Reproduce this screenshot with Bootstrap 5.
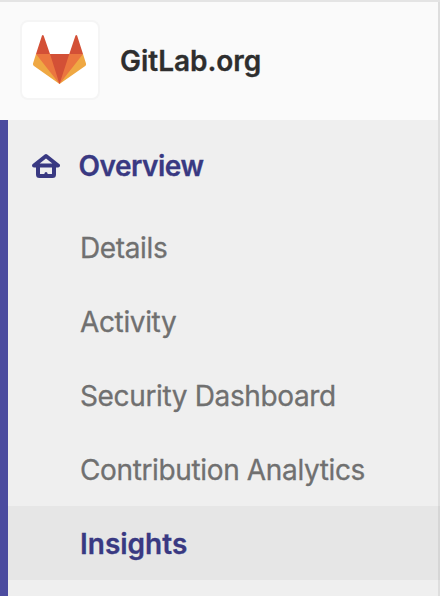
<!DOCTYPE html>
<html lang="en">
<head>
<meta charset="utf-8">
<meta name="viewport" content="width=device-width, initial-scale=1">
<title>GitLab.org</title>
<link rel="stylesheet" href="https://cdn.jsdelivr.net/npm/bootstrap@5.3.0/dist/css/bootstrap.min.css">
<style>
body{font-family:Inter,"Liberation Sans",sans-serif;font-size:28px;line-height:36px;background:#efefef}
.group-sidebar{width:440px;height:596px;border-top:2px solid #e4e4e4;box-shadow:inset -2px 0 #dedede;background:#efefef;-webkit-text-stroke:.3px currentColor}
.group-header{height:118px;margin-right:2px;padding-left:20px;gap:20px;background:#fafafa;color:#2e2e2e}
.group-avatar{width:80px;height:80px;margin-bottom:2px;border:2px solid #f5f5f5;border-radius:8px;background:#fff}
.group-name{letter-spacing:-.03px}
.section-nav{border-left:8px solid #4b4b9f;height:476px}
.section-title{height:90px;padding:1px 0 0 24px;gap:18.500px;color:#393982}
.section-title span{letter-spacing:-.5px}
.section-nav .nav-link{height:74px;padding:2px 0 0 72px;color:#707070;letter-spacing:-.36px}
.section-nav .nav-link.active{color:#393982;background:rgba(0,0,0,.037);letter-spacing:0}
</style>
<script src="https://cdn.jsdelivr.net/npm/bootstrap@5.3.0/dist/js/bootstrap.bundle.min.js"></script>
</head>
<body class="overflow-hidden">
<aside class="group-sidebar">
<header class="group-header d-flex align-items-center">
<div class="group-avatar d-flex align-items-center justify-content-center flex-shrink-0">
<svg width="76" height="76" viewBox="22 22 76 76" aria-hidden="true">
<path fill="#efa843" d="M36 54 33 63.5Q32.7 65 34 66L59.5 84 85.200 66Q86.500 65 86 63.500L83 54Z"/>
<path fill="#eb763f" d="M36 54H83L59.500 84Z"/>
<path fill="#d35036" d="M50 54H69.300L59.500 84ZM36 54 42 35.500Q42.800 34.300 43.600 35.500L50 54ZM69.300 54 75.500 35.500Q76.300 34.300 77.100 35.500L83 54Z"/>
</svg>
</div>
<span class="group-name fw-semibold">GitLab.org</span>
</header>
<nav class="section-nav">
<div class="section-title d-flex align-items-center">
<svg width="28" height="26" viewBox="0 0 28 26" fill="none" stroke="#393982" stroke-width="4" stroke-linejoin="round" stroke-linecap="round" aria-hidden="true">
<path d="M2 12.500 14 3 26 12.500Z"/><path d="M6 13V21.500Q6 23 7.500 23H20.500Q22 23 22 21.500V13"/><path stroke-width="3" d="M14 20.500V22"/>
</svg>
<span class="fw-semibold">Overview</span>
</div>
<div class="nav flex-column flex-nowrap">
<a class="nav-link d-flex align-items-center" href="#">Details</a>
<a class="nav-link d-flex align-items-center" href="#">Activity</a>
<a class="nav-link d-flex align-items-center" href="#">Security Dashboard</a>
<a class="nav-link d-flex align-items-center" href="#">Contribution Analytics</a>
<a class="nav-link active d-flex align-items-center fw-semibold" aria-current="page" href="#">Insights</a>
</div>
</nav>
</aside>
</body>
</html>
